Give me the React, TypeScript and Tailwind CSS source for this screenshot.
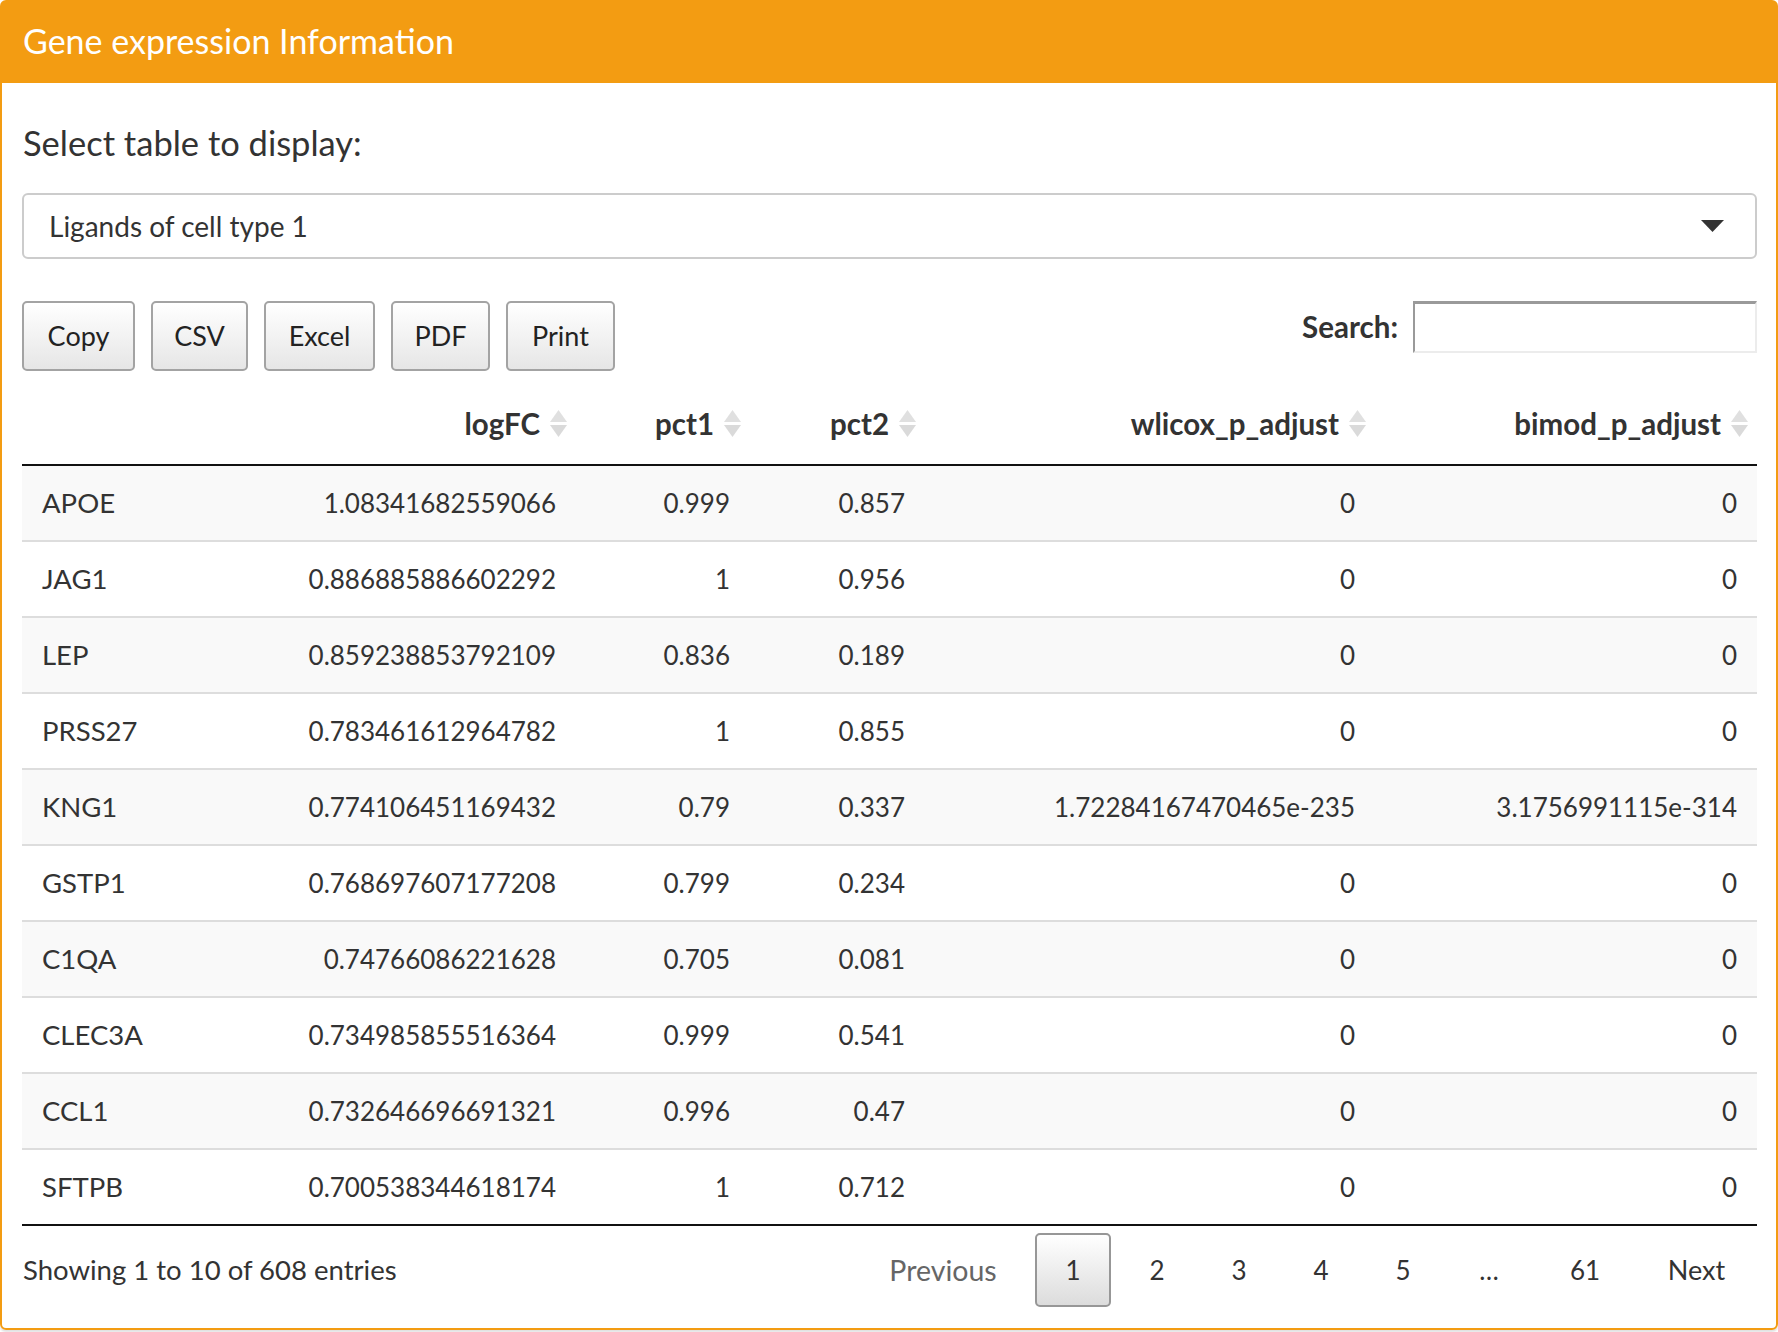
import React from "react";

const rows: [string, string, string, string, string, string][] = [
  ["APOE", "1.08341682559066", "0.999", "0.857", "0", "0"],
  ["JAG1", "0.886885886602292", "1", "0.956", "0", "0"],
  ["LEP", "0.859238853792109", "0.836", "0.189", "0", "0"],
  ["PRSS27", "0.783461612964782", "1", "0.855", "0", "0"],
  ["KNG1", "0.774106451169432", "0.79", "0.337", "1.72284167470465e-235", "3.1756991115e-314"],
  ["GSTP1", "0.768697607177208", "0.799", "0.234", "0", "0"],
  ["C1QA", "0.74766086221628", "0.705", "0.081", "0", "0"],
  ["CLEC3A", "0.734985855516364", "0.999", "0.541", "0", "0"],
  ["CCL1", "0.732646696691321", "0.996", "0.47", "0", "0"],
  ["SFTPB", "0.700538344618174", "1", "0.712", "0", "0"],
];

function SortIcon() {
  return (
    <svg width="17" height="28" viewBox="0 0 17 28" className="shrink-0">
      <polygon points="8.5,0 17,12 0,12" fill="#e0e0e0" />
      <polygon points="0,15 17,15 8.5,27" fill="#dadada" />
    </svg>
  );
}

function HeadCell({ label }: { label: string }) {
  return (
    <div className="flex items-center justify-end gap-[10px] pr-[9px] pt-[33px] pb-[20px] h-[93px]">
      <span className="font-bold leading-[40px] text-[29.5px] text-[#333]">{label}</span>
      <SortIcon />
    </div>
  );
}

const btnClass =
  "h-[70px] border-2 border-[#a3a3a3] rounded-[5px] bg-gradient-to-b from-white to-[#e6e6e6] flex items-center justify-center text-[#222]";

export default function App() {
  return (
    <div className="w-[1778px] h-[1332px] bg-white font-['Lato','Noto_Sans',sans-serif] text-[#333] text-[26px]">
      <div className="border-2 border-[#f39c12] rounded-[6px] shadow-[0_2px_2px_rgba(0,0,0,0.12)] h-[1330px] flex flex-col">
        <div className="bg-[#f39c12] h-[81px] flex items-center px-[20px] pb-[4px]">
          <h3 className="text-white text-[34px] leading-[40px] ml-[1px]">Gene expression Information</h3>
        </div>
        <div className="px-[20px] pt-[41px] flex flex-col">
          <label className="leading-[40px] text-[34.5px] h-[40px] ml-[1px] -mt-[1px] mb-[1px]">Select table to display:</label>
          <div className="mt-[29px] h-[66px] border-2 border-[#cccccc] rounded-[6px] flex items-center justify-between pl-[25px] pr-[31px] w-[1735px]">
            <span className="text-[28px] text-[#333]">Ligands of cell type 1</span>
            <svg width="23" height="12" viewBox="0 0 23 12">
              <polygon points="0,0 23,0 11.5,12" fill="#333" />
            </svg>
          </div>

          <div className="mt-[42px] flex justify-between items-start w-[1735px]">
            <div className="flex gap-[16px] text-[27px]">
              <div className={`${btnClass} w-[113px]`}>Copy</div>
              <div className={`${btnClass} w-[97px]`}>CSV</div>
              <div className={`${btnClass} w-[111px]`}>Excel</div>
              <div className={`${btnClass} w-[99px]`}>PDF</div>
              <div className={`${btnClass} w-[109px]`}>Print</div>
            </div>
            <div className="flex items-center gap-[15px] h-[52px]">
              <span className="font-bold text-[29.5px]">Search:</span>
              <div className="w-[344px] h-[52px] border-2 border-t-[3px] border-t-[#9a9a9a] border-l-[#9a9a9a] border-b-[#ececec] border-r-[#ececec] bg-white" />
            </div>
          </div>

          <div className="w-[1735px] flex flex-col">
            <div className="grid grid-cols-[200px_354px_174px_175px_450px_382px] border-b-2 border-[#111]">
              <div />
              <HeadCell label="logFC" />
              <HeadCell label="pct1" />
              <HeadCell label="pct2" />
              <HeadCell label="wlicox_p_adjust" />
              <HeadCell label="bimod_p_adjust" />
            </div>
            {rows.map((r, i) => (
              <div
                key={r[0]}
                className={`grid grid-cols-[200px_354px_174px_175px_450px_382px] h-[74px] items-center ${
                  i > 0 ? "border-t-2 border-[#dddddd] h-[76px]" : ""
                } ${i % 2 === 0 ? "bg-[#f9f9f9]" : "bg-white"}`}
              >
                <div className="pl-[20px] text-[27.5px]">{r[0]}</div>
                <div className="pr-[20px] text-right">{r[1]}</div>
                <div className="pr-[20px] text-right">{r[2]}</div>
                <div className="pr-[20px] text-right">{r[3]}</div>
                <div className="pr-[20px] text-right">{r[4]}</div>
                <div className="pr-[20px] text-right">{r[5]}</div>
              </div>
            ))}
            <div className="border-t-2 border-[#111]" />
          </div>

          <div className="w-[1735px] flex items-center justify-between mt-[7px] h-[74px]">
            <span className="ml-[1px] text-[27.5px]">Showing 1 to 10 of 608 entries</span>
            <div className="flex items-center h-[74px]">
              <div className="w-[176px] text-center text-[#666] text-[28.5px]">Previous</div>
              <div className="ml-[4px] w-[76px] h-[74px] border-2 border-[#979797] rounded-[5px] bg-gradient-to-b from-white to-[#dcdcdc] flex items-center justify-center">
                1
              </div>
              <div className="ml-[5px] w-[82px] text-center">2</div>
              <div className="w-[82px] text-center">3</div>
              <div className="w-[82px] text-center">4</div>
              <div className="w-[82px] text-center">5</div>
              <div className="w-[90px] text-center">…</div>
              <div className="w-[102px] text-center">61</div>
              <div className="w-[121px] text-center text-[27px]">Next</div>
            </div>
          </div>
        </div>
      </div>
    </div>
  );
}
